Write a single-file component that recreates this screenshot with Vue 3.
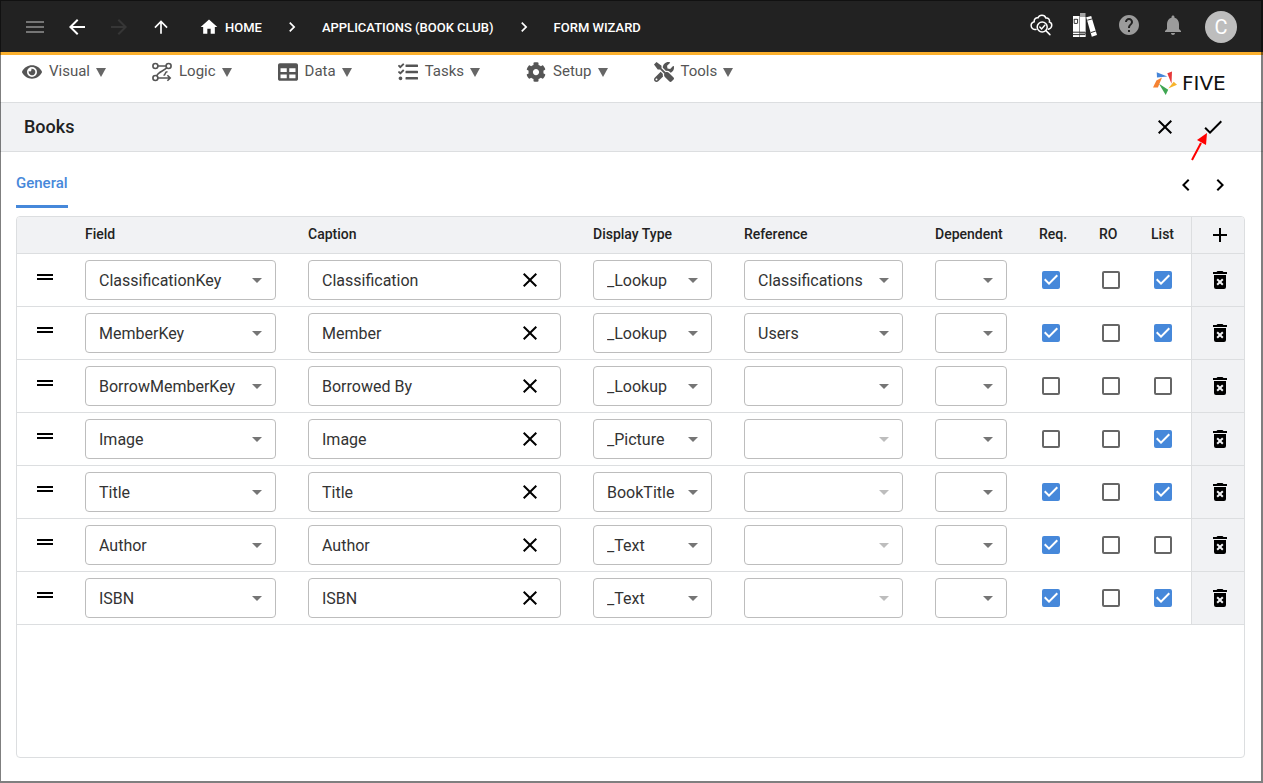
<script setup>
import { ref } from 'vue'

const icons = {
  menu: 'M3 18h18v-2H3v2zm0-5h18v-2H3v2zm0-7v2h18V6H3z',
  back: 'M20 11H7.83l5.59-5.59L12 4l-8 8 8 8 1.41-1.41L7.83 13H20v-2z',
  forward: 'M12 4l-1.41 1.41L16.17 11H4v2h12.17l-5.58 5.59L12 20l8-8z',
  up: 'M4 12l1.41 1.41L11 7.83V20h2V7.83l5.58 5.59L20 12l-8-8-8 8z',
  home: 'M10 20v-6h4v6h5v-8h3L12 3 2 12h3v8z',
  right: 'M10 6L8.59 7.41 13.17 12l-4.58 4.59L10 18l6-6z',
  left: 'M15.41 7.41L14 6l-6 6 6 6 1.41-1.41L10.83 12z',
  help: 'M12 2C6.48 2 2 6.48 2 12s4.48 10 10 10 10-4.48 10-10S17.52 2 12 2zm1 17h-2v-2h2v2zm2.07-7.75l-.9.92C13.45 12.9 13 13.5 13 15h-2v-.5c0-1.1.45-2.1 1.17-2.83l1.24-1.26c.37-.36.59-.86.59-1.41 0-1.1-.9-2-2-2s-2 .9-2 2H8c0-2.21 1.79-4 4-4s4 1.79 4 4c0 .88-.36 1.68-.93 2.25z',
  bell: 'M12 22c1.1 0 2-.9 2-2h-4c0 1.1.89 2 2 2zm6-6v-5c0-3.07-1.64-5.64-4.5-6.32V4c0-.83-.67-1.5-1.5-1.5s-1.5.67-1.5 1.5v.68C7.63 5.36 6 7.92 6 11v5l-2 2v1h16v-1l-2-2z',
  close: 'M19 6.41L17.59 5 12 10.59 6.41 5 5 6.41 10.59 12 5 17.59 6.41 19 12 13.41 17.59 19 19 17.59 13.41 12z',
  check: 'M9 16.17L4.83 12l-1.42 1.41L9 19 21 7l-1.41-1.41z',
  add: 'M19 13h-6v6h-2v-6H5v-2h6V5h2v6h6v2z',
  drag: 'M20 9H4v2h16V9zM4 15h16v-2H4v2z',
  drop: 'M7 10l5 5 5-5z',
  trash: 'M6,19A2,2 0 0,0 8,21H16A2,2 0 0,0 18,19V7H6V19M8.46,11.88L9.87,10.47L12,12.59L14.12,10.47L15.53,11.88L13.41,14L15.53,16.12L14.12,17.53L12,15.41L9.88,17.53L8.47,16.12L10.59,14L8.46,11.88M15.5,4L14.5,3H9.5L8.5,4H5V6H19V4H15.5Z',
  tick: 'M10 17l-5-5 1.41-1.41L10 14.17l7.59-7.59L19 8l-9 9z',
}

const menus = [
  { label: 'Visual', box: '0 0 576 512', path: 'M572.52 241.4C518.29 135.59 410.93 64 288 64S57.68 135.64 3.48 241.41a32.35 32.35 0 0 0 0 29.19C57.71 376.41 165.07 448 288 448s230.32-71.64 284.52-177.41a32.35 32.35 0 0 0 0-29.19zM288 400a144 144 0 1 1 144-144 143.93 143.93 0 0 1-144 144zm0-240a95.31 95.31 0 0 0-25.31 3.79 47.85 47.85 0 0 1-66.9 66.9A95.78 95.78 0 1 0 288 160z' },
  { label: 'Logic', box: '0 0 20 20', flow: true },
  { label: 'Data', box: '0 0 512 512', path: 'M464 32H48C21.49 32 0 53.49 0 80v352c0 26.51 21.49 48 48 48h416c26.51 0 48-21.49 48-48V80c0-26.51-21.49-48-48-48zM224 416H64v-96h160v96zm0-160H64v-96h160v96zm224 160H288v-96h160v96zm0-160H288v-96h160v96z' },
  { label: 'Tasks', box: '0 0 512 512', path: 'M139.61 35.5a12 12 0 0 0-17 0L58.93 98.81l-22.7-22.12a12 12 0 0 0-17 0L3.53 92.41a12 12 0 0 0 0 17l47.59 47.4a12.78 12.78 0 0 0 17.61 0l15.59-15.62L156.52 69a12.09 12.09 0 0 0 .09-17zm0 159.19a12 12 0 0 0-17 0l-63.68 63.72-22.7-22.1a12 12 0 0 0-17 0L3.53 252a12 12 0 0 0 0 17L51 316.5a12.77 12.77 0 0 0 17.6 0l15.7-15.69 72.2-72.22a12 12 0 0 0 .09-16.9zM64 368c-26.49 0-48.59 21.5-48.59 48S37.53 464 64 464a48 48 0 0 0 0-96zm432 16H208a16 16 0 0 0-16 16v32a16 16 0 0 0 16 16h288a16 16 0 0 0 16-16v-32a16 16 0 0 0-16-16zm0-320H208a16 16 0 0 0-16 16v32a16 16 0 0 0 16 16h288a16 16 0 0 0 16-16V80a16 16 0 0 0-16-16zm0 160H208a16 16 0 0 0-16 16v32a16 16 0 0 0 16 16h288a16 16 0 0 0 16-16v-32a16 16 0 0 0-16-16z' },
  { label: 'Setup', box: '0 0 512 512', path: 'M487.4 315.7l-42.6-24.6c4.3-23.2 4.3-47 0-70.2l42.6-24.6c4.9-2.8 7.1-8.6 5.5-14-11.1-35.6-30-67.8-54.7-94.6-3.8-4.1-10-5.1-14.8-2.3L380.8 110c-17.9-15.4-38.5-27.3-60.8-35.1V25.8c0-5.6-3.9-10.5-9.4-11.7-36.7-8.2-74.3-7.8-109.2 0-5.5 1.2-9.4 6.1-9.4 11.7V75c-22.2 7.9-42.8 19.8-60.8 35.1L88.7 85.5c-4.9-2.8-11-1.9-14.8 2.3-24.7 26.7-43.6 58.9-54.7 94.6-1.7 5.4.6 11.2 5.5 14L67.3 221c-4.3 23.2-4.3 47 0 70.2l-42.6 24.6c-4.9 2.8-7.1 8.6-5.5 14 11.1 35.6 30 67.8 54.7 94.6 3.8 4.1 10 5.1 14.8 2.3l42.6-24.6c17.9 15.4 38.5 27.3 60.8 35.1v49.2c0 5.6 3.9 10.5 9.4 11.7 36.7 8.2 74.3 7.8 109.2 0 5.5-1.2 9.4-6.1 9.4-11.7v-49.2c22.2-7.9 42.8-19.8 60.8-35.1l42.6 24.6c4.9 2.8 11 1.9 14.8-2.3 24.7-26.7 43.6-58.9 54.7-94.6 1.5-5.5-.7-11.3-5.6-14.1zM256 336c-44.1 0-80-35.9-80-80s35.9-80 80-80 80 35.9 80 80-35.9 80-80 80z' },
  { label: 'Tools', box: '0 0 512 512', path: 'M501.1 395.7L384 278.6c-23.1-23.1-57.6-27.6-85.4-13.9L192 158.1V96L64 0 0 64l96 128h62.1l106.6 106.6c-13.6 27.8-9.2 62.3 13.9 85.4l117.1 117.1c14.6 14.6 38.2 14.6 52.7 0l52.7-52.7c14.5-14.6 14.5-38.2 0-52.7zM331.7 225c28.3 0 54.9 11 74.9 31l19.4 19.4c15.8-6.9 30.8-16.5 43.8-29.5 37.1-37.1 49.7-89.3 37.9-136.7-2.2-9-13.5-12.1-20.1-5.5l-74.4 74.4-67.9-11.3L334 98.9l74.4-74.4c6.6-6.6 3.4-17.9-5.7-20.2-47.4-11.7-99.6.9-136.6 37.9-28.5 28.5-41.9 66.1-41.2 103.6l82.1 82.1c8.1-1.9 16.5-2.9 24.7-2.9zm-103.9 82l-56.7-56.7L18.7 402.8c-25 25-25 65.5 0 90.5s65.5 25 90.5 0l123.6-123.6c-7.6-19.9-9.9-41.6-5-62.7zM64 472c-13.2 0-24-10.8-24-24 0-13.3 10.7-24 24-24s24 10.7 24 24c0 13.2-10.7 24-24 24z' },
]

const selects = [
  { key: 'field', label: 'Field' },
  { key: 'display', label: 'Display Type' },
  { key: 'reference', label: 'Reference' },
  { key: 'dependent', label: 'Dependent' },
]
const flags = [
  { key: 'req', label: 'Req.' },
  { key: 'ro', label: 'RO' },
  { key: 'list', label: 'List' },
]

const row = (field, caption, display, reference, req, list, locked = false) => ({
  field, caption, display, reference, dependent: '', req, ro: false, list, locked,
})
const rows = ref([
  row('ClassificationKey', 'Classification', '_Lookup', 'Classifications', true, true),
  row('MemberKey', 'Member', '_Lookup', 'Users', true, true),
  row('BorrowMemberKey', 'Borrowed By', '_Lookup', '', false, false),
  row('Image', 'Image', '_Picture', '', false, true, true),
  row('Title', 'Title', 'BookTitle', '', true, true, true),
  row('Author', 'Author', '_Text', '', true, false, true),
  row('ISBN', 'ISBN', '_Text', '', true, true, true),
])
</script>

<template>
  <div class="app">
    <header class="topbar">
      <nav class="history" aria-label="History">
        <button class="icon-btn dim" aria-label="Menu"><svg class="i24" viewBox="0 0 24 24"><path :d="icons.menu" /></svg></button>
        <button class="icon-btn" aria-label="Back"><svg class="i24" viewBox="0 0 24 24"><path :d="icons.back" /></svg></button>
        <button class="icon-btn off" aria-label="Forward" disabled><svg class="i24" viewBox="0 0 24 24"><path :d="icons.forward" /></svg></button>
        <button class="icon-btn" aria-label="Up"><svg class="i20" viewBox="0 0 24 24"><path :d="icons.up" /></svg></button>
      </nav>
      <nav class="crumbs" aria-label="Breadcrumb">
        <a href="#"><svg class="i20" viewBox="0 0 24 24"><path :d="icons.home" /></svg>HOME</a>
        <svg class="i20" viewBox="0 0 24 24"><path :d="icons.right" /></svg>
        <a href="#">APPLICATIONS (BOOK CLUB)</a>
        <svg class="i20" viewBox="0 0 24 24"><path :d="icons.right" /></svg>
        <a href="#">FORM WIZARD</a>
      </nav>
      <div class="actions">
        <button class="icon-btn" aria-label="Inspect">
          <svg class="i24 line" viewBox="0 0 24 24">
            <path d="M7 16.4H5.8A3.9 3.9 0 0 1 5.2 8.7 C4.8 6.2 7 4.4 9 4.8 C10.4 1.4 15.6 1.4 16.8 5 C19.2 4.6 21.2 6.7 20.4 9 C23.6 10 23.8 15 19.4 16.3" />
            <circle cx="13.2" cy="14" r="5" />
            <path d="M16.9 17.6l4 4M10.8 14l1.8 1.9 3.2-3.6" />
          </svg>
        </button>
        <button class="icon-btn" aria-label="Library">
          <svg class="i24" viewBox="0 0 24 24">
            <path d="M0 3h6.5v21H0z" /><path class="shade" d="M7 0h5.5v24H7z" />
            <path d="M7 4h5.5v15H7zM7 21.6h5.5V24H7zM13.2 4.3l5-1.3 5.8 19-5.2 1.8z" />
            <path class="cut" d="M1.2 6.3h3.2M1.2 6v4.3M4.6 6v4.3M1.2 10.4h3.2M0 19.2h12M0 21.6h12M14.2 7.2l5-1.3M17.8 19.6l5-1.6" />
          </svg>
        </button>
        <button class="icon-btn muted" aria-label="Help"><svg class="i24" viewBox="0 0 24 24"><path :d="icons.help" /></svg></button>
        <button class="icon-btn muted" aria-label="Notifications"><svg class="i24" viewBox="0 0 24 24"><path :d="icons.bell" /></svg></button>
        <button class="avatar" aria-label="Account">C</button>
      </div>
    </header>

    <div class="menubar">
      <nav class="menus" aria-label="Main">
        <button v-for="m in menus" :key="m.label" class="menu">
          <svg class="i20" :viewBox="m.box">
            <path v-if="m.path" :d="m.path" />
            <g v-else class="flow">
              <circle cx="3.4" cy="4" r="2.5" /><circle cx="16.6" cy="4" r="2.5" /><circle cx="3.4" cy="16" r="2.5" />
              <path d="M6 4h8M14.8 5.8C12 9 6 9.8 4.8 13.8M6 16h12M15.4 13.2l2.8 2.8-2.8 2.8M11.5 13.2c2.8 0 .5-3.4 4-3.4" />
            </g>
          </svg>
          <span class="menu-label">{{ m.label }}</span>
          <svg class="caret" viewBox="0 0 10 10"><path d="M0 1h10L5 10z" /></svg>
        </button>
      </nav>
      <a class="brand" href="#">
        <svg class="i24" viewBox="0 0 24 24">
          <path fill="#4585d8" d="M3.7 1.2L14.3 5.6 4 6.4z" />
          <path fill="#e6393a" d="M14.3 2.2L19 .5l-.5 12.3z" />
          <path fill="#f7b32b" d="M15.3 17.5l5.4-6.7 3.3 3z" />
          <path fill="#3fa652" d="M6 12.8l9.2 6L12.7 24z" />
          <path fill="#f58232" d="M0 16.4L3.4 9.6 9 6.5 4.9 16.6z" />
        </svg>
        <span>FIVE</span>
      </a>
    </div>

    <div class="titlebar">
      <h1>Books</h1>
      <button class="bar-btn" aria-label="Cancel"><svg class="i24" viewBox="0 0 24 24"><path :d="icons.close" /></svg></button>
      <button class="bar-btn" aria-label="Save">
        <svg class="i24" viewBox="0 0 24 24"><path :d="icons.check" /></svg>
        <svg class="pointer" viewBox="0 0 18 30"><path d="M2 28L11 11" /><path class="tip" d="M17 1L16 13 7 8z" /></svg>
      </button>
    </div>

    <main class="content">
      <div class="tabs">
        <button class="tab">General</button>
        <div class="pager">
          <button class="page-btn" aria-label="Previous"><svg class="i24" viewBox="0 0 24 24"><path :d="icons.left" /></svg></button>
          <button class="page-btn" aria-label="Next"><svg class="i24" viewBox="0 0 24 24"><path :d="icons.right" /></svg></button>
        </div>
      </div>

      <div class="panel">
        <table>
          <colgroup>
            <col class="c-drag"><col class="c-field"><col><col class="c-display"><col class="c-reference">
            <col class="c-dependent"><col class="c-req"><col class="c-ro"><col class="c-list"><col class="c-tools">
          </colgroup>
          <thead>
            <tr>
              <th></th>
              <th>Field</th>
              <th>Caption</th>
              <th>Display Type</th>
              <th>Reference</th>
              <th>Dependent</th>
              <th v-for="f in flags" :key="f.key">{{ f.label }}</th>
              <th class="tools"><button class="cell-btn" aria-label="Add row"><svg class="i24" viewBox="0 0 24 24"><path :d="icons.add" /></svg></button></th>
            </tr>
          </thead>
          <tbody>
            <tr v-for="(r, i) in rows" :key="i">
              <td class="drag"><button class="cell-btn" aria-label="Move row"><svg class="i24" viewBox="0 0 24 24"><path :d="icons.drag" /></svg></button></td>
              <template v-for="s in selects" :key="s.key">
                <td>
                  <div class="select">
                    <select v-model="r[s.key]" :aria-label="s.label" :disabled="s.key === 'reference' && r.locked">
                      <option :value="r[s.key]">{{ r[s.key] }}</option>
                    </select>
                    <svg class="i24" viewBox="0 0 24 24"><path :d="icons.drop" /></svg>
                  </div>
                </td>
                <td v-if="s.key === 'field'">
                  <div class="textbox">
                    <input v-model="r.caption" type="text" aria-label="Caption">
                    <button class="cell-btn" aria-label="Clear caption" @click="r.caption = ''"><svg class="i24" viewBox="0 0 24 24"><path :d="icons.close" /></svg></button>
                  </div>
                </td>
              </template>
              <td v-for="f in flags" :key="f.key">
                <label class="check">
                  <input v-model="r[f.key]" type="checkbox" :aria-label="f.label">
                  <svg v-if="r[f.key]" viewBox="3 3 18 18"><path :d="icons.tick" /></svg>
                </label>
              </td>
              <td class="tools"><button class="cell-btn" aria-label="Delete row"><svg class="i24" viewBox="0 0 24 24"><path :d="icons.trash" /></svg></button></td>
            </tr>
          </tbody>
        </table>
      </div>
    </main>
  </div>
</template>

<style>
body {
  margin: 0;
}
</style>

<style scoped>
.app {
  position: relative;
  display: flex;
  flex-direction: column;
  box-sizing: border-box;
  min-height: 100vh;
  background: #fff;
  color: #222;
  font-family: Roboto, "Liberation Sans", sans-serif;
  font-size: 14px;
}
.app::after {
  content: "";
  position: absolute;
  inset: 0;
  border: solid rgba(0, 0, 0, 0.5);
  border-width: 1px 2px 2px 1px;
  pointer-events: none;
}
button, input, select {
  font: inherit;
  color: inherit;
  margin: 0;
  padding: 0;
  border: 0;
  background: none;
}
button {
  display: flex;
  align-items: center;
  justify-content: center;
}
a {
  color: inherit;
  text-decoration: none;
}
svg {
  display: block;
  flex: none;
  fill: currentColor;
}
.i24 {
  width: 24px;
  height: 24px;
}
.i20 {
  width: 20px;
  height: 20px;
}

.topbar {
  display: flex;
  align-items: center;
  box-sizing: border-box;
  height: 55px;
  padding: 2px 26px 0 14px;
  border-bottom: 3px solid #fbb02d;
  background: #222;
  color: #fff;
}
.history {
  display: flex;
}
.icon-btn {
  width: 42px;
  height: 40px;
}
.icon-btn.dim {
  color: #757575;
}
.icon-btn.off {
  color: #363636;
}
.icon-btn.muted {
  color: #9b9b9b;
}
.crumbs {
  display: flex;
  align-items: center;
  gap: 20px;
  margin-left: 17px;
  font-size: 13px;
  font-weight: 500;
}
.crumbs a {
  display: flex;
  align-items: center;
  gap: 6px;
}
.actions {
  display: flex;
  align-items: center;
  margin-left: auto;
}
.actions .icon-btn {
  width: 44px;
  padding-bottom: 4px;
}
.line {
  fill: none;
  stroke: currentColor;
  stroke-width: 1.5;
  stroke-linecap: round;
}
.shade {
  fill: #a5a5a5;
}
.cut {
  fill: none;
  stroke: #333;
  stroke-width: 1;
}
.avatar {
  width: 32px;
  height: 32px;
  margin-left: 10px;
  border-radius: 50%;
  background: #bdbdbd;
  font-size: 20px;
}

.menubar {
  display: flex;
  justify-content: space-between;
  box-sizing: border-box;
  height: 48px;
  padding: 6px 22px 0 22px;
  border-bottom: 1px solid #dcdee0;
}
.menus {
  display: flex;
  align-items: flex-start;
  gap: 46px;
  color: #555;
}
.menu {
  height: 22px;
  font-size: 15px;
  line-height: 20px;
}
.menu-label {
  margin: 0 6px 2px 7px;
  color: #555;
}
.caret {
  width: 10px;
  height: 12px;
  color: #666;
}
.flow {
  fill: none;
  stroke: currentColor;
  stroke-width: 1.6;
}
.brand {
  display: flex;
  align-items: center;
  gap: 5px;
  width: 88px;
  padding-top: 2px;
  color: #111;
  font: 20px "DejaVu Sans", sans-serif;
}

.titlebar {
  display: flex;
  align-items: center;
  box-sizing: border-box;
  height: 49px;
  padding: 0 26px 0 24px;
  border-bottom: 1px solid #dcdee0;
  background: #f1f2f4;
}
h1 {
  flex: 1;
  margin: 0;
  padding-bottom: 2px;
  font-size: 18px;
  font-weight: 500;
}
.bar-btn {
  position: relative;
  width: 48px;
  height: 48px;
  color: #000;
}
.pointer {
  position: absolute;
  left: 1px;
  top: 29px;
  width: 18px;
  height: 30px;
  fill: none;
  stroke: #f00;
  stroke-width: 2;
}
.pointer .tip {
  fill: #f00;
  stroke: none;
}

.content {
  display: flex;
  flex: 1;
  flex-direction: column;
  padding: 8px 18px 25px 16px;
}
.tabs {
  display: flex;
  justify-content: space-between;
  margin-bottom: 8px;
}
.tab {
  box-sizing: border-box;
  height: 48px;
  border-bottom: 3px solid #4688da;
  border-radius: 2px 2px 0 0;
  color: #4688da;
  font-size: 15px;
  font-weight: 500;
}
.pager {
  display: flex;
  padding: 1px 8px 0 0;
}
.page-btn {
  width: 34px;
  color: #000;
}
.panel {
  flex: 1;
  overflow: hidden;
  border: 1px solid #dcdee0;
  border-radius: 4px;
}
table {
  width: 100%;
  table-layout: fixed;
  border-spacing: 0;
}
.c-drag { width: 52px; }
.c-field { width: 223px; }
.c-display { width: 151px; }
.c-reference { width: 191px; }
.c-dependent { width: 104px; }
.c-req { width: 60px; }
.c-ro { width: 52px; }
.c-list { width: 56px; }
.c-tools { width: 53px; }
th, td {
  box-sizing: border-box;
  padding: 0 16px;
  border-bottom: 1px solid #dcdee0;
  text-align: left;
}
th {
  height: 37px;
  padding-bottom: 2px;
  background: #f1f2f4;
  font-weight: 500;
  white-space: nowrap;
}
td {
  height: 53px;
}
.tools {
  padding: 0 12px 0 16px;
  border-left: 1px solid #dcdee0;
  background: #f1f2f4;
}
.drag {
  padding-bottom: 6px;
}
.cell-btn {
  width: 24px;
  height: 24px;
  color: #000;
}
.select {
  display: grid;
  grid-template-columns: 1fr;
  align-items: center;
}
.select select, .select svg {
  grid-area: 1 / 1;
}
.select select, .textbox {
  box-sizing: border-box;
  width: 100%;
  height: 40px;
  border: 1px solid #bdbdbd;
  border-radius: 4px;
  color: #333;
  font-size: 16px;
}
.select select {
  appearance: none;
  padding: 0 24px 0 13px;
  opacity: 1;
}
.select svg {
  justify-self: end;
  margin-right: 7px;
  color: #757575;
  pointer-events: none;
}
.select select:disabled + svg {
  color: #bdbdbd;
}
.textbox {
  display: flex;
  align-items: center;
  padding: 0 18px 0 13px;
}
.textbox input {
  flex: 1;
  min-width: 0;
  outline: 0;
}
.check {
  display: grid;
  width: 18px;
  height: 18px;
  margin-left: 3px;
}
.check input, .check svg {
  grid-area: 1 / 1;
}
.check input {
  box-sizing: border-box;
  appearance: none;
  width: 18px;
  height: 18px;
  border: 2px solid #666;
  border-radius: 2px;
}
.check input:checked {
  border-color: #4688da;
  background: #4688da;
}
.check svg {
  width: 18px;
  height: 18px;
  color: #fff;
  pointer-events: none;
}
</style>
